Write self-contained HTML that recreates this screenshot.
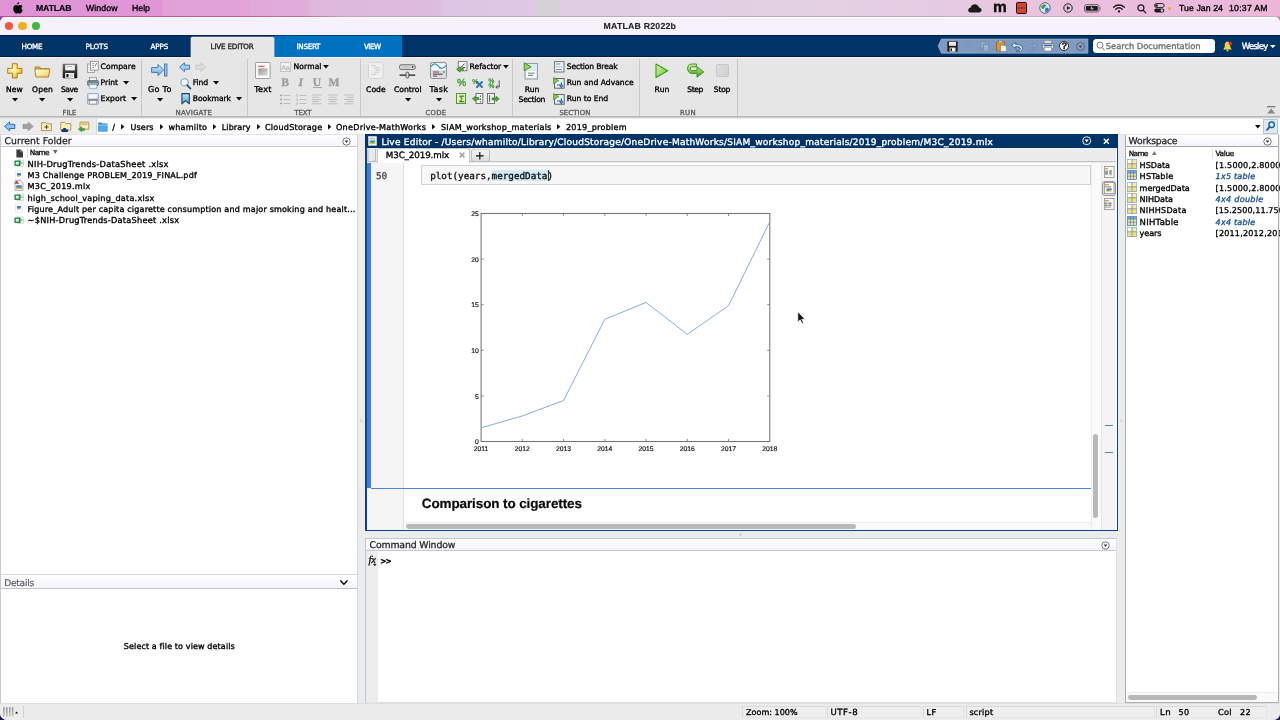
<!DOCTYPE html>
<html lang="en">
<head>
<meta charset="utf-8">
<title>MATLAB R2022b</title>
<style>
html,body{margin:0;padding:0;}
body{width:1280px;height:720px;overflow:hidden;position:relative;background:#ececec;font-family:"DejaVu Sans","Liberation Sans",sans-serif;}
#app{position:absolute;left:0;top:0;width:1280px;height:720px;overflow:hidden;will-change:transform;}
#app div,#app svg,#app .t{position:absolute;box-sizing:border-box;}
.t{white-space:pre;display:block;margin:0;padding:0;-webkit-text-stroke:.33px currentColor;text-rendering:geometricPrecision;}
svg{overflow:visible;}

</style>
</head>
<body>
<div id="app">
<section class="desktop">
<div style="left:0px;top:16px;width:9px;height:9px;background:linear-gradient(135deg,#a62bb4,#8e2a6a);"></div>
<div style="left:1272px;top:16px;width:8px;height:8px;background:#d879bd;"></div>
<div style="left:0px;top:708px;width:12px;height:12px;background:#1b0f52;"></div>
<div style="left:1268px;top:708px;width:12px;height:12px;background:#2a1a6a;"></div>
<div class="window" style="left:0px;top:16px;width:1280px;height:704px;background:#ececec;border-radius:6.5px 6.5px 7px 7px;"></div>
</section>
<section class="mac-menubar">
<div class="menubar" style="left:0px;top:0px;width:1280px;height:16.5px;background:linear-gradient(90deg,#df93d5 0,#e096d6 162px,#e1a1d7 163px,#e1a4d8 250px,#e0a9d9 251px,#e0acda 309px,#deb7dd 310px,#ddbcde 441px,#dcc5e4 442px,#dec8e4 534px,#d3d0d6 535px,#d3d0d6 560px,#e1cde2 561px,#e3d0e3 800px,#e6cbe2 960px,#eabfdd 1100px,#edb6d8 1280px);"></div>
<div style="left:0px;top:16px;width:1280px;height:1px;background:linear-gradient(90deg,#b44ea3 0,#c264ab 300px,#c79cc0 340px,#b3aabd 420px,#b7b0c2 1280px);"></div>
<svg style="left:12.5px;top:1.5px;" width="10" height="12" viewBox="0 0 10 12"><path d="M6.2 0.1 C6.3 1.3 5.3 2.6 4.1 2.6 C3.9 1.4 5.1 0.2 6.2 0.1 Z" fill="#0a0a0a"/><path d="M5 3.6 C5.7 3.6 6.3 3 7.3 3 C8.2 3 9 3.5 9.5 4.2 C8 5.2 8.2 7.4 9.8 8.1 C9.4 9.3 8.3 11.6 7.1 11.6 C6.4 11.6 6 11.2 5.1 11.2 C4.2 11.2 3.8 11.6 3.1 11.6 C1.8 11.6 0.2 8.8 0.2 6.6 C0.2 4.4 1.6 3 3.1 3 C3.9 3 4.5 3.6 5 3.6 Z" fill="#0a0a0a"/></svg>
<span class="t" style='left:36.00px;top:4px;font:700 8.73px/1 "Liberation Sans", sans-serif;color:#000;letter-spacing:-0.142px;-webkit-text-stroke-width:0.15px;'>MATLAB</span>
<span class="t" style='left:86.00px;top:4px;font:8.73px/1 "Liberation Sans", sans-serif;color:#000;letter-spacing:0.089px;'>Window</span>
<span class="t" style='left:132.00px;top:4px;font:8.73px/1 "Liberation Sans", sans-serif;color:#000;letter-spacing:0.013px;'>Help</span>
<svg style="left:968px;top:3.5px;" width="14" height="9" viewBox="0 0 14 9"><path d="M3.2 8.6 C1.4 8.6 .2 7.6 .2 6.2 C.2 4.9 1.2 3.9 2.6 3.8 C3 1.7 4.7 .3 6.8 .3 C8.8 .3 10.4 1.6 10.9 3.4 C12.5 3.6 13.6 4.7 13.6 6.1 C13.6 7.5 12.4 8.6 10.8 8.6 Z" fill="#1c1c1c"/></svg>
<span class="t" style='left:993.00px;top:0px;font:700 15.5px/1 "Liberation Sans", sans-serif;color:#0c0c0c;'>m</span>
<div style="left:1015.8px;top:2px;width:10.8px;height:11.8px;background:#d9442f;border:1.6px solid #1d1214;border-radius:1.6px;"></div>
<div style="left:1017.4px;top:7px;width:7.6px;height:1.8px;background:#8a4526;"></div>
<svg style="left:1038.6px;top:2.1px;" width="12" height="12" viewBox="0 0 12 12"><circle cx="6" cy="6" r="5.3" fill="#d9e6ee" stroke="#5a6a78" stroke-width="1"/><path d="M2 4.5 C3.5 2.5 6 2 7.5 3.2 C6.5 5 5 5.2 4.5 7 C3.2 7 2.2 6 2 4.5 Z" fill="#3f9b4a"/><path d="M6.5 6 C8 5.5 9.8 6.2 10.3 7.5 C9.5 9.6 7.6 10.4 6.4 10 C6 8.8 6 7 6.5 6 Z" fill="#2d78c8"/></svg>
<svg style="left:1062.6px;top:3.2px;" width="10" height="10" viewBox="0 0 10 10"><circle cx="5" cy="5" r="4.2" fill="none" stroke="#1c1c1c" stroke-width="1"/><path d="M3.9 3 L7.2 5 L3.9 7 Z" fill="#1c1c1c"/></svg>
<svg style="left:1084px;top:4px;" width="18" height="9" viewBox="0 0 18 9"><rect x=".5" y=".6" width="14.6" height="7.4" rx="2" fill="none" stroke="#555" stroke-width=".9"/><rect x="1.8" y="1.9" width="12" height="4.8" rx="1" fill="#1c1c1c"/><path d="M15.9 3 V5.7 C16.8 5.4 16.8 3.3 15.9 3 Z" fill="#555"/><path d="M8.6 1 L6 4.7 H7.8 L7 7.7 L9.8 3.9 H8 Z" fill="#e9c7df" stroke="#1c1c1c" stroke-width=".3"/></svg>
<svg style="left:1112.6px;top:3.6px;" width="12" height="9" viewBox="0 0 12 9"><path d="M.6 3.2 C3.6 .3 8.4 .3 11.4 3.2" fill="none" stroke="#1c1c1c" stroke-width="1.35" stroke-linecap="round"/><path d="M2.7 5.3 C4.6 3.6 7.4 3.6 9.3 5.3" fill="none" stroke="#1c1c1c" stroke-width="1.35" stroke-linecap="round"/><circle cx="6" cy="7.5" r="1.15" fill="#1c1c1c"/></svg>
<svg style="left:1136.6px;top:3.6px;" width="10" height="10" viewBox="0 0 10 10"><circle cx="3.9" cy="3.9" r="3" fill="none" stroke="#1c1c1c" stroke-width="1.2"/><path d="M6.1 6.1 L8.8 8.9" stroke="#1c1c1c" stroke-width="1.3" stroke-linecap="round"/></svg>
<svg style="left:1154px;top:3.4px;" width="11" height="10" viewBox="0 0 11 10"><rect x=".5" y=".5" width="9.6" height="4" rx="2" fill="none" stroke="#1c1c1c" stroke-width=".9"/><circle cx="2.6" cy="2.5" r="1.3" fill="#1c1c1c"/><rect x=".3" y="5.4" width="10" height="4.2" rx="2.1" fill="#1c1c1c"/><circle cx="7.9" cy="7.5" r="1.2" fill="#e9c7df"/></svg>
<div style="left:1167.6px;top:7px;width:3px;height:3px;background:#f0a227;border-radius:50%;"></div>
<span class="t" style='left:1179.00px;top:4px;font:8.73px/1 "Liberation Sans", sans-serif;color:#000;letter-spacing:0.071px;'>Tue Jan 24</span>
<span class="t" style='left:1229.00px;top:4px;font:8.73px/1 "Liberation Sans", sans-serif;color:#000;letter-spacing:0.230px;'>10:37 AM</span>
</section>
<section class="window-titlebar">
<div class="titlebar" style="left:0px;top:16.9px;width:1280px;height:18.1px;background:#f5f2fb;border-radius:6.5px 6.5px 0 0;box-shadow:inset 0 1.2px 0 #fff;"></div>
<div style="left:5.15px;top:21.85px;width:8.3px;height:8.3px;background:#f4553f;border-radius:50%;"></div>
<div style="left:18.450000000000003px;top:21.85px;width:8.3px;height:8.3px;background:#f3af22;border-radius:50%;"></div>
<div style="left:31.85px;top:21.85px;width:8.3px;height:8.3px;background:#3fb63b;border-radius:50%;"></div>
<span class="t" style='left:603.50px;top:22px;font:700 8.73px/1 "Liberation Sans", sans-serif;color:#222;letter-spacing:0.234px;-webkit-text-stroke-width:0.1px;'>MATLAB R2022b</span>
</section>
<section class="toolstrip-tabs">
<div class="tabstrip" style="left:0px;top:35px;width:1280px;height:22px;background:#003366;"></div>
<div style="left:274px;top:35px;width:128px;height:22px;background:#0071bf;"></div>
<div style="left:0px;top:35px;width:1280px;height:1px;background:rgba(0,0,40,.45);"></div>
<div style="left:0px;top:55.8px;width:274px;height:1.2px;background:rgba(0,0,50,.5);"></div>
<div style="left:402px;top:55.8px;width:878px;height:1.2px;background:rgba(0,0,50,.5);"></div>
<div style="left:0px;top:57px;width:1280px;height:1px;background:#f3f3f3;"></div>
<div style="left:190.5px;top:37.3px;width:83.5px;height:20.8px;background:#e6e6e6;border-radius:1.5px 1.5px 0 0;box-shadow:0 0 0 .6px rgba(255,255,255,.55);"></div>
<span class="t" style='left:21.50px;top:43px;font:7.18px/1 "DejaVu Sans", "Liberation Sans", sans-serif;color:#fff;letter-spacing:-0.250px;'>HOME</span>
<span class="t" style='left:85.50px;top:43px;font:7.18px/1 "DejaVu Sans", "Liberation Sans", sans-serif;color:#fff;letter-spacing:-0.036px;'>PLOTS</span>
<span class="t" style='left:150.60px;top:43px;font:7.18px/1 "DejaVu Sans", "Liberation Sans", sans-serif;color:#fff;letter-spacing:-0.137px;'>APPS</span>
<span class="t" style='left:210.60px;top:43px;font:7.18px/1 "DejaVu Sans", "Liberation Sans", sans-serif;color:#222;letter-spacing:-0.180px;'>LIVE EDITOR</span>
<span class="t" style='left:296.50px;top:43px;font:7.18px/1 "DejaVu Sans", "Liberation Sans", sans-serif;color:#fff;letter-spacing:-0.280px;'>INSERT</span>
<span class="t" style='left:364.00px;top:43px;font:7.18px/1 "DejaVu Sans", "Liberation Sans", sans-serif;color:#fff;letter-spacing:-0.547px;'>VIEW</span>
<svg style="left:938px;top:39px;" width="150" height="14.2" viewBox="0 0 150 14.2"><path d="M0 7.1 L3.4 0 H150 V14.2 H3.4 Z" fill="#7f9abf" stroke="#a9bdd8" stroke-width=".6"/></svg>
<svg style="left:946.5px;top:40.5px;" width="11" height="11" viewBox="0 0 11 11"><rect x=".3" y=".3" width="10.4" height="10.4" rx="1" fill="#222"/><rect x="2" y=".8" width="7" height="4" fill="#e8e8e8"/><rect x="2.6" y="6.6" width="5.8" height="4" fill="#f4f4f4"/><rect x="3.4" y="7.4" width="1.6" height="2.6" fill="#222"/></svg>
<svg style="left:964px;top:41px;opacity:.9;" width="9" height="11" viewBox="0 0 9 11"><path d="M6.2 0 L3.2 7 M2.6 1 L5.4 7" stroke="#7d96b4" stroke-width="1" fill="none"/><circle cx="2.4" cy="8.4" r="1.6" fill="none" stroke="#7d96b4" stroke-width="1"/><circle cx="6" cy="8.4" r="1.6" fill="none" stroke="#7d96b4" stroke-width="1"/></svg>
<svg style="left:980px;top:41px;" width="10" height="11" viewBox="0 0 10 11"><rect x=".5" y=".5" width="5" height="6.6" fill="#93a9c8" stroke="#748fb2" stroke-width=".8"/><rect x="3.6" y="3.4" width="5" height="6.6" fill="#9fb3cf" stroke="#748fb2" stroke-width=".8"/></svg>
<svg style="left:995.5px;top:40px;" width="11" height="12" viewBox="0 0 11 12"><rect x=".5" y="1.6" width="8" height="9.4" rx=".8" fill="#d9962c" stroke="#8a5a12" stroke-width=".7"/><rect x="2.4" y=".4" width="4.2" height="2.4" rx=".6" fill="#cfcfcf" stroke="#666" stroke-width=".5"/><path d="M4.6 5.2 H8.6 L10.4 7 V11.6 H4.6 Z" fill="#f1f1f1" stroke="#777" stroke-width=".6"/></svg>
<svg style="left:1010.6px;top:41.5px;" width="12" height="10" viewBox="0 0 12 10"><path d="M4.6 .4 L.4 3.4 L4.6 6.4 V4.6 C7.8 4.4 9.6 5.4 9.4 7 C9.2 8.2 7.6 8.8 5.4 8.7 V9.8 C9 10 11.6 8.8 11.6 6.6 C11.6 3.8 8.6 2.2 4.6 2.3 Z" fill="#dfeaf7" stroke="#1e5a9c" stroke-width=".8"/></svg>
<svg style="left:1026px;top:41.5px;" width="12" height="10" viewBox="0 0 12 10"><path d="M7.4 .4 L11.6 3.4 L7.4 6.4 V4.6 C4.2 4.4 2.4 5.4 2.6 7 C2.8 8.2 4.4 8.8 6.6 8.7 V9.8 C3 10 .4 8.8 .4 6.6 C.4 3.8 3.4 2.2 7.4 2.3 Z" fill="#8aa3c6" stroke="#6d8cab" stroke-width=".8"/></svg>
<svg style="left:1042px;top:40.4px;" width="12" height="11.4" viewBox="0 0 12 11.4"><rect x="2.2" y=".4" width="7.4" height="3.6" fill="#e0e0e0" stroke="#777" stroke-width=".5"/><rect x=".4" y="3.4" width="11.2" height="5.4" rx=".9" fill="#dcdcdc" stroke="#555" stroke-width=".6"/><rect x="1.8" y="4.6" width="8.4" height="1.6" fill="#2c6fb5"/><rect x="2.2" y="7.4" width="7.4" height="3.6" fill="#fafafa" stroke="#777" stroke-width=".5"/></svg>
<div style="left:1059px;top:40.6px;width:10.4px;height:10.4px;background:#fff;border-radius:50%;border:1.2px solid #2a2a35;"></div>
<span class="t" style='left:1061.60px;top:41px;font:700 9.4px/1 "Liberation Sans", sans-serif;color:#1a1a25;'>?</span>
<svg style="left:1075.6px;top:41.5px;" width="9" height="9" viewBox="0 0 9 9"><circle cx="4.5" cy="4.5" r="3.9" fill="#8ea4c4" stroke="#4a5b74" stroke-width=".9"/><path d="M2.5 3.5 H6.5 L4.5 6.3 Z" fill="#3d4c63"/></svg>
<div style="left:1092.8px;top:39px;width:122.4px;height:14.2px;background:#fff;border-radius:3.5px;"></div>
<svg style="left:1095.5px;top:41px;" width="9" height="10" viewBox="0 0 9 10"><circle cx="4" cy="4.2" r="3" fill="none" stroke="#6a6a6a" stroke-width=".9"/><path d="M6.2 6.6 L8.6 9.3" stroke="#6a6a6a" stroke-width="1"/></svg>
<span class="t" style='left:1105.80px;top:42px;font:8.34px/1 "DejaVu Sans", "Liberation Sans", sans-serif;color:#6b6b6b;letter-spacing:-0.040px;-webkit-text-stroke-width:0.3px;'>Search Documentation</span>
<svg style="left:1223.2px;top:40.6px;" width="10" height="11" viewBox="0 0 10 11"><path d="M4.4 .6 C2.6 .9 1.8 2.4 1.8 4.2 C1.8 6.2 1.2 7.2 .4 7.9 V8.6 H8.6 V7.9 C7.8 7.2 7.2 6.2 7.2 4.2 C7.2 2.4 6.2 .9 4.4 .6 Z" fill="#f3cf3a"/><circle cx="4.5" cy="9.5" r="1" fill="#f3cf3a"/><circle cx="7.4" cy="2.5" r="1.8" fill="#e5262b"/></svg>
<span class="t" style='left:1241.70px;top:43px;font:8.54px/1 "DejaVu Sans", "Liberation Sans", sans-serif;color:#fff;letter-spacing:-0.743px;'>Wesley</span>
<svg style="left:1269.6px;top:44.6px;" width="6" height="4" viewBox="0 0 6 4"><path d="M0 0 H5.6 L2.8 3.2 Z" fill="#fff"/></svg>
</section>
<section class="toolstrip-body">
<div class="toolstrip" style="left:0px;top:58px;width:1280px;height:58.2px;background:#e6e6e6;"></div>
<div style="left:0px;top:116.2px;width:1280px;height:1.1px;background:#b5b5b5;"></div>
<div style="left:0px;top:117.3px;width:1280px;height:1px;background:#cdcdcd;"></div>
<div style="left:0px;top:118.3px;width:1280px;height:1px;background:#ececec;"></div>
<div style="left:141.4px;top:58.6px;width:1px;height:57.4px;background:#c9c9c9;"></div>
<div style="left:247.3px;top:58.6px;width:1px;height:57.4px;background:#c9c9c9;"></div>
<div style="left:360px;top:58.6px;width:1px;height:57.4px;background:#c9c9c9;"></div>
<div style="left:512.2px;top:58.6px;width:1px;height:57.4px;background:#c9c9c9;"></div>
<div style="left:639.3px;top:58.6px;width:1px;height:57.4px;background:#c9c9c9;"></div>
<div style="left:737.3px;top:58.6px;width:1px;height:57.4px;background:#c9c9c9;"></div>
<svg style="left:7px;top:63px;" width="16" height="16" viewBox="0 0 16 16"><defs><radialGradient id="gnew" cx=".35" cy=".35" r=".8"><stop offset="0" stop-color="#fffde0"/><stop offset=".45" stop-color="#fbe36a"/><stop offset="1" stop-color="#e2a91e"/></radialGradient></defs><path d="M5.4 .7 H10.2 V5.4 H15 V10.2 H10.2 V15 H5.4 V10.2 H.7 V5.4 H5.4 Z" fill="url(#gnew)" stroke="#b27c1c" stroke-width="1" stroke-linejoin="round"/></svg>
<span class="t" style='left:6.00px;top:86px;font:7.61px/1 "DejaVu Sans", "Liberation Sans", sans-serif;color:#000;letter-spacing:0.102px;'>New</span>
<svg style="left:11.700000000000001px;top:98.25px;" width="6.2" height="3.5" viewBox="0 0 6.2 3.5"><path d="M0 0 H6.2 L3.1 3.5 Z" fill="#0a0a0a"/></svg>
<svg style="left:33.8px;top:65.6px;" width="17" height="12" viewBox="0 0 17 12"><defs><linearGradient id="gop" x1="0" y1="0" x2="1" y2="1"><stop offset="0" stop-color="#fffef2"/><stop offset=".5" stop-color="#fbeaa0"/><stop offset="1" stop-color="#efc94e"/></linearGradient></defs><path d="M.8 1 H5.6 L7.2 2.8 H15 V5 H3 Z" fill="#e9c25c" stroke="#a8761e" stroke-width=".9" stroke-linejoin="round"/><path d="M.8 3 H15.8 L14.6 11 H2 Z" fill="url(#gop)" stroke="#a8761e" stroke-width=".9" stroke-linejoin="round"/></svg>
<span class="t" style='left:32.00px;top:86px;font:7.61px/1 "DejaVu Sans", "Liberation Sans", sans-serif;color:#000;letter-spacing:0.158px;'>Open</span>
<svg style="left:39.199999999999996px;top:98.25px;" width="6.2" height="3.5" viewBox="0 0 6.2 3.5"><path d="M0 0 H6.2 L3.1 3.5 Z" fill="#0a0a0a"/></svg>
<svg style="left:62px;top:62.8px;" width="16" height="16" viewBox="0 0 16 16"><defs><linearGradient id="gsv" x1="0" y1="0" x2="0" y2="1"><stop offset="0" stop-color="#6e6e6e"/><stop offset=".5" stop-color="#3a3a3a"/><stop offset="1" stop-color="#0e0e0e"/></linearGradient></defs><rect x=".7" y=".7" width="14.6" height="14.6" rx="1" fill="url(#gsv)"/><rect x="3.2" y="1.8" width="9.6" height="5.6" fill="#f2f2f2"/><rect x="4.6" y="3" width="5.4" height="1" fill="#b5b5b5"/><rect x="3.2" y="10" width="9" height="5" fill="#f4f4f4"/><rect x="4.4" y="11" width="2.2" height="3.4" fill="#222"/><rect x="7.6" y="11" width="3.6" height="3.4" fill="#d8d8d8"/></svg>
<span class="t" style='left:61.00px;top:86px;font:7.61px/1 "DejaVu Sans", "Liberation Sans", sans-serif;color:#000;letter-spacing:-0.496px;'>Save</span>
<svg style="left:67.10000000000001px;top:98.25px;" width="6.2" height="3.5" viewBox="0 0 6.2 3.5"><path d="M0 0 H6.2 L3.1 3.5 Z" fill="#0a0a0a"/></svg>
<svg style="left:87px;top:61px;" width="12" height="12" viewBox="0 0 12 12"><rect x=".5" y="3" width="7" height="8.4" fill="#f3f3f3" stroke="#888" stroke-width=".7"/><rect x="3.6" y=".5" width="7.6" height="8.6" fill="#fafafa" stroke="#777" stroke-width=".7"/><path d="M5.4 2.6 H7 M5.4 4.6 H7 M5.4 6.6 H7" stroke="#555" stroke-width=".7"/><path d="M7.8 5.6 L9.8 2" stroke="#555" stroke-width=".7"/></svg>
<span class="t" style='left:100.60px;top:63px;font:7.61px/1 "DejaVu Sans", "Liberation Sans", sans-serif;color:#000;letter-spacing:0.079px;'>Compare</span>
<svg style="left:87px;top:77px;" width="12" height="12" viewBox="0 0 12 12"><rect x="2.4" y=".6" width="7.2" height="3.4" fill="#f2f2f2" stroke="#777" stroke-width=".6"/><rect x=".5" y="3.6" width="11" height="5" rx="1" fill="#7f8994" stroke="#4a5560" stroke-width=".6"/><rect x="1.6" y="6.4" width="8.8" height="1.5" fill="#9fc6ea"/><rect x="2.2" y="7.8" width="7.6" height="3.4" fill="#fcfcfc" stroke="#5d8fc2" stroke-width=".6"/></svg>
<span class="t" style='left:100.60px;top:79px;font:7.61px/1 "DejaVu Sans", "Liberation Sans", sans-serif;color:#000;letter-spacing:-0.026px;'>Print</span>
<svg style="left:122.60000000000001px;top:80.85px;" width="6.2" height="3.5" viewBox="0 0 6.2 3.5"><path d="M0 0 H6.2 L3.1 3.5 Z" fill="#0a0a0a"/></svg>
<svg style="left:87px;top:93px;" width="12" height="12" viewBox="0 0 12 12"><rect x=".6" y=".6" width="10.8" height="10.6" rx=".8" fill="#cfe1f2" stroke="#7a9cc0" stroke-width=".8"/><rect x="2.2" y="1.4" width="7.6" height="4" fill="#f6f6f6"/><rect x="1.2" y="5.8" width="9.6" height="2.4" fill="#8a8f96"/><rect x="2.8" y="7.6" width="6.4" height="3.4" fill="#fafafa" stroke="#777" stroke-width=".5"/></svg>
<span class="t" style='left:100.60px;top:95px;font:7.61px/1 "DejaVu Sans", "Liberation Sans", sans-serif;color:#000;letter-spacing:0.097px;'>Export</span>
<svg style="left:130.70000000000002px;top:96.95px;" width="6.2" height="3.5" viewBox="0 0 6.2 3.5"><path d="M0 0 H6.2 L3.1 3.5 Z" fill="#0a0a0a"/></svg>
<span class="t" style='left:62.60px;top:110px;font:6.89px/1 "DejaVu Sans", "Liberation Sans", sans-serif;color:#5c5c5c;letter-spacing:-0.124px;'>FILE</span>
<svg style="left:151px;top:63px;" width="17" height="14" viewBox="0 0 17 14"><defs><linearGradient id="ggo" x1="0" y1="0" x2="0" y2="1"><stop offset="0" stop-color="#d9ecfb"/><stop offset="1" stop-color="#6ea9de"/></linearGradient></defs><path d="M.6 4.6 H7 V1.4 L12.6 7 L7 12.6 V9.4 H.6 Z" fill="url(#ggo)" stroke="#2f6fb1" stroke-width=".9" stroke-linejoin="round"/><rect x="13.4" y="1" width="2.6" height="12" fill="#8fc0ea" stroke="#2f6fb1" stroke-width=".8"/></svg>
<span class="t" style='left:148.00px;top:85px;font:8.09px/1 "DejaVu Sans", "Liberation Sans", sans-serif;color:#000;letter-spacing:0.278px;'>Go To</span>
<svg style="left:156.6px;top:98.25px;" width="6.2" height="3.5" viewBox="0 0 6.2 3.5"><path d="M0 0 H6.2 L3.1 3.5 Z" fill="#0a0a0a"/></svg>
<svg style="left:179px;top:61.5px;" width="28" height="11" viewBox="0 0 28 11"><path d="M.6 5.2 L5.4 .8 V3.2 H10.6 V7.2 H5.4 V9.6 Z" fill="#a9cff0" stroke="#2f6fb1" stroke-width=".9" stroke-linejoin="round"/><path d="M26.8 5.2 L22 .8 V3.2 H16.8 V7.2 H22 V9.6 Z" fill="#dcdcdc" stroke="#c2c2c2" stroke-width=".8" stroke-linejoin="round"/></svg>
<svg style="left:180px;top:77.5px;" width="12" height="12" viewBox="0 0 12 12"><circle cx="4.6" cy="4.4" r="3.6" fill="#f2f8fd" stroke="#6f9fce" stroke-width="1.1"/><path d="M7.2 7.2 L10.4 10.6" stroke="#1f4f8f" stroke-width="1.8" stroke-linecap="round"/></svg>
<span class="t" style='left:192.80px;top:79px;font:7.61px/1 "DejaVu Sans", "Liberation Sans", sans-serif;color:#000;letter-spacing:-0.132px;'>Find</span>
<svg style="left:213.20000000000002px;top:80.85px;" width="6.2" height="3.5" viewBox="0 0 6.2 3.5"><path d="M0 0 H6.2 L3.1 3.5 Z" fill="#0a0a0a"/></svg>
<svg style="left:180.5px;top:93px;" width="10" height="12" viewBox="0 0 10 12"><defs><linearGradient id="gbm" x1="0" y1="0" x2="0" y2="1"><stop offset="0" stop-color="#bfe6f7"/><stop offset="1" stop-color="#4ba3d6"/></linearGradient></defs><path d="M.9 .6 H8.3 V10.8 L4.6 7.6 L.9 10.8 Z" fill="url(#gbm)" stroke="#1d3f5f" stroke-width="1.1" stroke-linejoin="round"/></svg>
<span class="t" style='left:192.80px;top:95px;font:7.61px/1 "DejaVu Sans", "Liberation Sans", sans-serif;color:#000;letter-spacing:-0.051px;'>Bookmark</span>
<svg style="left:236.1px;top:96.95px;" width="6.2" height="3.5" viewBox="0 0 6.2 3.5"><path d="M0 0 H6.2 L3.1 3.5 Z" fill="#0a0a0a"/></svg>
<span class="t" style='left:175.60px;top:110px;font:7.0px/1 "DejaVu Sans", "Liberation Sans", sans-serif;color:#5c5c5c;letter-spacing:0.234px;'>NAVIGATE</span>
<svg style="left:255px;top:62px;" width="16" height="17" viewBox="0 0 16 17"><rect x=".5" y=".5" width="14.6" height="16" rx=".8" fill="#fbfbfb" stroke="#8a8a8a" stroke-width=".8"/><rect x="3.2" y="3.8" width="6.4" height="1" fill="#e8402a"/><defs><linearGradient id="gtx" x1="0" y1="0" x2="1" y2="1"><stop offset="0" stop-color="#9a9a9a"/><stop offset="1" stop-color="#dadada"/></linearGradient></defs><rect x="3.2" y="6.4" width="9.4" height="7" fill="url(#gtx)"/></svg>
<span class="t" style='left:254.20px;top:85px;font:8.09px/1 "DejaVu Sans", "Liberation Sans", sans-serif;color:#000;letter-spacing:0.283px;'>Text</span>
<div style="left:280px;top:61.5px;width:11px;height:10.6px;background:#f1f1f1;border:.8px solid #c4c4c4;"></div>
<span class="t" style='left:281.30px;top:65px;font:7.18px/1 "Liberation Sans", sans-serif;color:#bdbdbd;letter-spacing:-0.275px;'>Aa</span>
<span class="t" style='left:293.60px;top:63px;font:7.61px/1 "DejaVu Sans", "Liberation Sans", sans-serif;color:#000;letter-spacing:0.072px;'>Normal</span>
<svg style="left:322.90000000000003px;top:64.89999999999999px;" width="5.8" height="3.4" viewBox="0 0 5.8 3.4"><path d="M0 0 H5.8 L2.9 3.4 Z" fill="#0a0a0a"/></svg>
<span class="t" style='left:281.20px;top:77px;font:700 11.6px/1 "Liberation Serif", serif;color:#9c9c9c;'>B</span>
<span class="t" style='left:298.40px;top:77px;font:italic 700 11.6px/1 "Liberation Serif", serif;color:#9c9c9c;'>I</span>
<span class="t" style='left:312.80px;top:77px;font:700 11.6px/1 "Liberation Serif", serif;color:#9c9c9c;'>U</span>
<div style="left:313.4px;top:87.4px;width:8.2px;height:0.8px;background:#a8a8a8;"></div>
<span class="t" style='left:328.60px;top:77px;font:700 11.6px/1 "Liberation Serif", serif;color:#9c9c9c;'>M</span>
<svg style="left:280px;top:93.6px;" width="11" height="11" viewBox="0 0 11 11"><circle cx="1" cy="1.4" r=".95" fill="#9a9a9a"/><rect x="3.4" y="1" width="7" height=".9" fill="#b9b9b9"/><circle cx="1" cy="5.4" r=".95" fill="#9a9a9a"/><rect x="3.4" y="5" width="7" height=".9" fill="#b9b9b9"/><circle cx="1" cy="9.4" r=".95" fill="#9a9a9a"/><rect x="3.4" y="9" width="7" height=".9" fill="#b9b9b9"/></svg>
<svg style="left:296px;top:93.6px;" width="11" height="11" viewBox="0 0 11 11"><rect x=".6" y="0.4" width=".9" height="2.4" fill="#a5a5a5"/><rect x="3.4" y="1" width="7" height=".9" fill="#b9b9b9"/><rect x=".6" y="4.4" width=".9" height="2.4" fill="#a5a5a5"/><rect x="3.4" y="5" width="7" height=".9" fill="#b9b9b9"/><rect x=".6" y="8.4" width=".9" height="2.4" fill="#a5a5a5"/><rect x="3.4" y="9" width="7" height=".9" fill="#b9b9b9"/></svg>
<svg style="left:312.4px;top:93.6px;" width="10" height="11" viewBox="0 0 10 11"><rect x="0" y="0.6" width="9.6" height=".85" fill="#b9b9b9"/><rect x="0" y="2.8000000000000003" width="7" height=".85" fill="#b9b9b9"/><rect x="0" y="5.0" width="9.6" height=".85" fill="#b9b9b9"/><rect x="0" y="7.2" width="7" height=".85" fill="#b9b9b9"/><rect x="0" y="9.4" width="9.6" height=".85" fill="#b9b9b9"/></svg>
<svg style="left:328.4px;top:93.6px;" width="10" height="11" viewBox="0 0 10 11"><rect x="0.0" y="0.6" width="9.6" height=".85" fill="#b9b9b9"/><rect x="1.2999999999999998" y="2.8000000000000003" width="7" height=".85" fill="#b9b9b9"/><rect x="0.0" y="5.0" width="9.6" height=".85" fill="#b9b9b9"/><rect x="1.2999999999999998" y="7.2" width="7" height=".85" fill="#b9b9b9"/><rect x="0.0" y="9.4" width="9.6" height=".85" fill="#b9b9b9"/></svg>
<svg style="left:344.4px;top:93.6px;" width="10" height="11" viewBox="0 0 10 11"><rect x="0.0" y="0.6" width="9.6" height=".85" fill="#b9b9b9"/><rect x="2.5999999999999996" y="2.8000000000000003" width="7" height=".85" fill="#b9b9b9"/><rect x="0.0" y="5.0" width="9.6" height=".85" fill="#b9b9b9"/><rect x="2.5999999999999996" y="7.2" width="7" height=".85" fill="#b9b9b9"/><rect x="0.0" y="9.4" width="9.6" height=".85" fill="#b9b9b9"/></svg>
<span class="t" style='left:294.40px;top:110px;font:6.89px/1 "DejaVu Sans", "Liberation Sans", sans-serif;color:#5c5c5c;letter-spacing:-0.051px;'>TEXT</span>
<svg style="left:368px;top:62px;" width="16" height="17" viewBox="0 0 16 17"><rect x=".5" y=".5" width="14.6" height="16" rx=".8" fill="#efefef" stroke="#cfcfcf" stroke-width=".8"/><path d="M3.2 3.6 H8 M5.6 5.8 H11.6 M7.4 8 H12.4 M5.6 10.2 H11 M3.2 12.4 H8.4" stroke="#c6c6c6" stroke-width=".9"/></svg>
<span class="t" style='left:366.00px;top:86px;font:7.61px/1 "DejaVu Sans", "Liberation Sans", sans-serif;color:#000;letter-spacing:0.070px;'>Code</span>
<svg style="left:398.5px;top:63.5px;" width="17" height="15" viewBox="0 0 17 15"><rect x=".6" y=".8" width="15.6" height="4.6" rx="1.6" fill="#e9e9e9" stroke="#555" stroke-width=".9"/><rect x="2" y="2.2" width="10" height="1.6" fill="#bdbdbd"/><circle cx="13.6" cy="3.1" r="1" fill="#444"/><rect x=".6" y="10.4" width="15.6" height="1.5" fill="#3c3c3c"/><rect x="7" y="8.2" width="2.8" height="5.8" rx=".8" fill="#d8d8d8" stroke="#444" stroke-width=".8"/></svg>
<span class="t" style='left:394.00px;top:86px;font:7.61px/1 "DejaVu Sans", "Liberation Sans", sans-serif;color:#000;'>Control</span>
<svg style="left:404.5px;top:98.25px;" width="6.2" height="3.5" viewBox="0 0 6.2 3.5"><path d="M0 0 H6.2 L3.1 3.5 Z" fill="#0a0a0a"/></svg>
<svg style="left:430px;top:62px;" width="17" height="17" viewBox="0 0 17 17"><rect x=".6" y=".6" width="15.8" height="15.8" rx="1.6" fill="#f7f7f7" stroke="#777" stroke-width=".9"/><path d="M1.2 4.6 C3.4 1 5.8 1 8.4 4.4 C10.8 7.4 13.4 6.8 15.8 3.6" fill="none" stroke="#2a8ec9" stroke-width="1.1"/><rect x="1.2" y="8" width="14.6" height="7.6" fill="#dcdcdc"/><rect x="3" y="9.4" width="6" height="1.2" fill="#9a4a9a"/><rect x="3" y="11.6" width="9.6" height="1.2" fill="#555"/><rect x="3" y="13.6" width="4" height="1.1" fill="#9a4a9a"/><rect x="13" y="9.2" width="1.8" height="1.6" fill="#4aa33f"/></svg>
<span class="t" style='left:429.60px;top:85px;font:8.09px/1 "DejaVu Sans", "Liberation Sans", sans-serif;color:#000;letter-spacing:0.318px;'>Task</span>
<svg style="left:435.9px;top:98.25px;" width="6.2" height="3.5" viewBox="0 0 6.2 3.5"><path d="M0 0 H6.2 L3.1 3.5 Z" fill="#0a0a0a"/></svg>
<svg style="left:456px;top:61px;" width="12" height="12" viewBox="0 0 12 12"><rect x="2.2" y=".6" width="8.8" height="9.2" fill="#f5f5f5" stroke="#666" stroke-width=".8"/><path d="M4 7.4 L8.6 2.6 M6.6 6.4 H9.4" stroke="#333" stroke-width=".9"/><path d="M.4 8.2 L4.2 5.4 V7 H7.4 V9.6 H4.2 V11.2 Z" fill="#55a83a" stroke="#2f7a1e" stroke-width=".5"/></svg>
<span class="t" style='left:469.60px;top:63px;font:7.61px/1 "DejaVu Sans", "Liberation Sans", sans-serif;color:#000;letter-spacing:-0.046px;'>Refactor</span>
<svg style="left:502.90000000000003px;top:64.89999999999999px;" width="5.8" height="3.4" viewBox="0 0 5.8 3.4"><path d="M0 0 H5.8 L2.9 3.4 Z" fill="#0a0a0a"/></svg>
<span class="t" style='left:457.00px;top:79px;font:10.4px/1 "Liberation Sans", sans-serif;color:#3f9a2e;'>%</span>
<span class="t" style='left:472.20px;top:79px;font:7px/1 "Liberation Sans", sans-serif;color:#3f9a2e;'>%</span>
<svg style="left:476.2px;top:81px;" width="7" height="7" viewBox="0 0 7 7"><path d="M1 1 L6 6 M6 1 L1 6" stroke="#2f6fb5" stroke-width="2" stroke-linecap="round"/></svg>
<span class="t" style='left:488.60px;top:79px;font:6.6px/1 "Liberation Sans", sans-serif;color:#3f9a2e;'>%</span>
<span class="t" style='left:488.60px;top:84px;font:6.6px/1 "Liberation Sans", sans-serif;color:#3f9a2e;'>%</span>
<svg style="left:494.6px;top:79.6px;" width="6" height="9" viewBox="0 0 6 9"><path d="M4.2 .4 V7 H1.2 M2.6 5.4 L.8 7 L2.6 8.6" fill="none" stroke="#444" stroke-width=".9"/></svg>
<div style="left:456.4px;top:93.4px;width:10px;height:10.8px;background:#eef2b0;border:1px solid #4b9a3a;"></div>
<span class="t" style='left:459.00px;top:95px;font:9px/1 "Liberation Sans", sans-serif;color:#2d7d22;'>Σ</span>
<svg style="left:472px;top:93.4px;" width="12" height="11" viewBox="0 0 12 11"><rect x="4" y=".5" width="6.8" height="10" fill="#f2f2f2" stroke="#555" stroke-width=".8"/><path d="M8.4 2.4 V4 M8.4 5.4 V7 M8.4 8.2 V9.4" stroke="#444" stroke-width=".9"/><path d="M.3 5.6 L3.6 3 V4.6 H7 V6.8 H3.6 V8.4 Z" fill="#4aa33a" stroke="#2f7a1e" stroke-width=".5"/></svg>
<svg style="left:487.4px;top:93.4px;" width="13" height="11" viewBox="0 0 13 11"><rect x=".6" y=".5" width="7" height="10" fill="#f2f2f2" stroke="#555" stroke-width=".8"/><path d="M2.6 2.2 V9" stroke="#444" stroke-width=".9"/><path d="M12.4 5.8 L9 3.2 V4.8 H5 V7 H9 V8.6 Z" fill="#4aa33a" stroke="#2f7a1e" stroke-width=".5"/></svg>
<span class="t" style='left:425.60px;top:110px;font:6.89px/1 "DejaVu Sans", "Liberation Sans", sans-serif;color:#5c5c5c;letter-spacing:0.177px;'>CODE</span>
<svg style="left:523px;top:62px;" width="16" height="18" viewBox="0 0 16 18"><rect x="2" y="1.6" width="12.6" height="15.4" fill="#dcecf7" stroke="#7d8a96" stroke-width=".8"/><rect x="3.4" y="9" width="9.8" height="6.8" fill="#fbfbfb"/><path d="M5 11.2 H11.6 M5 13.4 H10" stroke="#666" stroke-width=".9"/><path d="M1.2 .8 L8.2 4.8 L1.2 8.8 Z" fill="#9ed45a" stroke="#3a8a1e" stroke-width=".9" stroke-linejoin="round"/></svg>
<span class="t" style='left:524.80px;top:86px;font:7.61px/1 "DejaVu Sans", "Liberation Sans", sans-serif;color:#000;'>Run</span>
<span class="t" style='left:518.60px;top:96px;font:7.61px/1 "DejaVu Sans", "Liberation Sans", sans-serif;color:#000;letter-spacing:-0.247px;'>Section</span>
<svg style="left:553.8px;top:61px;" width="10.2" height="11.2" viewBox="0 0 10.2 11.2"><rect x=".6" y=".6" width="9.4" height="10.4" fill="#eef4fa" stroke="#666" stroke-width=".9"/><rect x="2" y="2.2" width="4.4" height="1.6" fill="#9ab6d3"/><path d="M2 5.8 H8.6" stroke="#777" stroke-width=".7" stroke-dasharray="1 .7"/><path d="M2 8.6 H8" stroke="#5b7fa6" stroke-width=".9"/></svg>
<span class="t" style='left:566.80px;top:63px;font:7.61px/1 "DejaVu Sans", "Liberation Sans", sans-serif;color:#000;letter-spacing:-0.152px;'>Section Break</span>
<svg style="left:553px;top:77px;" width="12" height="12" viewBox="0 0 12 12"><rect x="1.6" y="1.6" width="9.6" height="9.6" fill="#e6f0f8" stroke="#555" stroke-width=".9"/><path d="M.6 .6 L5.6 3.6 L.6 6.6 Z" fill="#8fcf4f" stroke="#2f7a1e" stroke-width=".7"/><path d="M4 8 H8.6" stroke="#3a78b8" stroke-width="1.1"/><path d="M8.4 5.4 V9 M6.6 8 L8.4 10.6 L10.2 8" fill="none" stroke="#2f6fb5" stroke-width="1.2"/></svg>
<span class="t" style='left:566.80px;top:79px;font:7.61px/1 "DejaVu Sans", "Liberation Sans", sans-serif;color:#000;letter-spacing:0.021px;'>Run and Advance</span>
<svg style="left:553px;top:93px;" width="12" height="12" viewBox="0 0 12 12"><rect x="1.6" y="1.6" width="9.6" height="9.6" fill="#e6f0f8" stroke="#555" stroke-width=".9"/><path d="M.6 .6 L5.6 3.6 L.6 6.6 Z" fill="#8fcf4f" stroke="#2f7a1e" stroke-width=".7"/><path d="M4 8 H8.6" stroke="#3a78b8" stroke-width="1.1"/><path d="M8.4 5.4 V9 M6.6 8 L8.4 10.6 L10.2 8" fill="none" stroke="#2f6fb5" stroke-width="1.2"/></svg>
<span class="t" style='left:566.80px;top:95px;font:7.61px/1 "DejaVu Sans", "Liberation Sans", sans-serif;color:#000;letter-spacing:-0.014px;'>Run to End</span>
<span class="t" style='left:559.40px;top:110px;font:6.89px/1 "DejaVu Sans", "Liberation Sans", sans-serif;color:#5c5c5c;letter-spacing:0.112px;'>SECTION</span>
<svg style="left:655px;top:62.5px;" width="14" height="16" viewBox="0 0 14 16"><defs><linearGradient id="grun" x1="0" y1="0" x2="1" y2="1"><stop offset="0" stop-color="#d9f2a8"/><stop offset="1" stop-color="#6cc23a"/></linearGradient></defs><path d="M1 1 L12.8 7.8 L1 14.6 Z" fill="url(#grun)" stroke="#3f9a22" stroke-width="1.1" stroke-linejoin="round"/></svg>
<span class="t" style='left:654.60px;top:86px;font:7.61px/1 "DejaVu Sans", "Liberation Sans", sans-serif;color:#000;letter-spacing:0.102px;'>Run</span>
<svg style="left:687px;top:63px;" width="18" height="16" viewBox="0 0 18 16"><defs><linearGradient id="gstep" x1="0" y1="0" x2="0" y2="1"><stop offset="0" stop-color="#d3ee9a"/><stop offset=".5" stop-color="#8fcf4a"/><stop offset="1" stop-color="#3f9a22"/></linearGradient></defs><path d="M9.4 1 H4.8 C1.8 1 .6 3 .6 5.4 C.6 8 2 10.4 5 10.4 H10 V14.2 L16.8 9 L10 3.8 V7.6 H5.2 C3.8 7.6 3.4 6.4 3.4 5.4 C3.4 4.4 4 3.8 5.2 3.8 H9.4 Z" fill="url(#gstep)" stroke="#2f8a1c" stroke-width=".9" stroke-linejoin="round"/></svg>
<span class="t" style='left:687.20px;top:86px;font:7.61px/1 "DejaVu Sans", "Liberation Sans", sans-serif;color:#000;letter-spacing:-0.375px;'>Step</span>
<div style="left:716px;top:64px;width:13.2px;height:13px;background:linear-gradient(135deg,#dedede,#d0d0d0);border:1px solid #c8c8c8;border-radius:1.5px;"></div>
<span class="t" style='left:713.80px;top:86px;font:7.61px/1 "DejaVu Sans", "Liberation Sans", sans-serif;color:#000;letter-spacing:-0.236px;'>Stop</span>
<span class="t" style='left:680.00px;top:110px;font:6.89px/1 "DejaVu Sans", "Liberation Sans", sans-serif;color:#5c5c5c;letter-spacing:0.313px;'>RUN</span>
<svg style="left:1266.5px;top:105.5px;" width="9" height="8" viewBox="0 0 9 8"><path d="M0 .7 H8.4" stroke="#777" stroke-width="1.3"/><path d="M4.2 2.6 L8.2 7.6 H.2 Z" fill="#8a8a8a"/></svg>
</section>
<section class="address-bar">
<div class="addressbar" style="left:0px;top:119px;width:1280px;height:15.4px;background:#fff;"></div>
<div style="left:0px;top:119px;width:95.6px;height:15px;background:#ececec;"></div>
<div style="left:95.6px;top:119px;width:1px;height:15px;background:#d5d5d5;"></div>
<div style="left:0px;top:134px;width:1280px;height:1px;background:#e4e4e4;"></div>
<svg style="left:4px;top:120.8px;" width="12" height="11" viewBox="0 0 12 11"><path d="M.6 5.4 L5.6 .9 V3.3 H10.8 V7.5 H5.6 V9.9 Z" fill="#8fc4f0" stroke="#2a6db5" stroke-width="1" stroke-linejoin="round"/></svg>
<svg style="left:22px;top:120.6px;" width="12" height="11" viewBox="0 0 12 11"><path d="M11.2 5.4 L6.2 .9 V3.3 H1 V7.5 H6.2 V9.9 Z" fill="#a0a0a0" stroke="#8b8b8b" stroke-width=".6" stroke-linejoin="round"/></svg>
<svg style="left:41px;top:121.2px;" width="11" height="11" viewBox="0 0 11 11"><path d="M.6 1.6 H4.4 L5.4 2.8 H10.4 V9.6 H.6 Z" fill="#f9efbe" stroke="#ad7f2c" stroke-width=".8" stroke-linejoin="round"/><path d="M3.4 6 H7.6 M5.5 4 V8" stroke="#333" stroke-width=".9"/></svg>
<svg style="left:59.6px;top:120.6px;" width="12" height="12" viewBox="0 0 12 12"><path d="M.8 1.4 H4.6 L5.6 2.6 H10.8 V9 H.8 Z" fill="#f9efbe" stroke="#ad7f2c" stroke-width=".8" stroke-linejoin="round"/><path d="M2.4 11 C.8 11 .6 8.8 2.4 8.6 C2.8 6.6 6 6.4 6.6 8.4 C8.6 8.2 8.8 11 6.8 11 Z" fill="#12367a"/></svg>
<svg style="left:78.4px;top:120.6px;" width="12" height="12" viewBox="0 0 12 12"><path d="M2 1.2 H10.8 V8.2 H2 Z" fill="#f9efbe" stroke="#ad7f2c" stroke-width=".8" stroke-linejoin="round"/><path d="M3.4 3.2 H9.4" stroke="#a67d1e" stroke-width=".7"/><path d="M.4 8.2 L3.6 5.8 V7.4 H6.4 V9.4 H3.6 V10.8 Z" fill="#4aa33a" stroke="#2f7a1e" stroke-width=".5"/></svg>
<svg style="left:98px;top:122px;" width="10" height="10" viewBox="0 0 10 10"><path d="M.2 .4 H3.6 L4.4 1.4 H9.4 V9.4 H.2 Z" fill="#2a86d0"/><rect x=".2" y="2.8" width="9.2" height="6.6" fill="#4eaaea"/><rect x=".2" y="2.6" width="9.2" height=".9" fill="#a8d8f8"/></svg>
<span class="t" style='left:112.20px;top:123px;font:8.3px/1 "DejaVu Sans", "Liberation Sans", sans-serif;color:#000;'>/</span>
<span class="t" style='left:130.50px;top:124px;font:8.05px/1 "DejaVu Sans", "Liberation Sans", sans-serif;color:#000;letter-spacing:0.116px;'>Users</span>
<span class="t" style='left:168.40px;top:124px;font:8.05px/1 "DejaVu Sans", "Liberation Sans", sans-serif;color:#000;letter-spacing:0.227px;'>whamilto</span>
<span class="t" style='left:221.80px;top:124px;font:8.05px/1 "DejaVu Sans", "Liberation Sans", sans-serif;color:#000;letter-spacing:0.076px;'>Library</span>
<span class="t" style='left:265.00px;top:124px;font:8.07px/1 "DejaVu Sans", "Liberation Sans", sans-serif;color:#000;letter-spacing:0.234px;'>CloudStorage</span>
<span class="t" style='left:336.00px;top:123px;font:8.1px/1 "DejaVu Sans", "Liberation Sans", sans-serif;color:#000;letter-spacing:0.238px;'>OneDrive-MathWorks</span>
<span class="t" style='left:441.00px;top:123px;font:8.12px/1 "DejaVu Sans", "Liberation Sans", sans-serif;color:#000;letter-spacing:0.226px;'>SIAM_workshop_materials</span>
<span class="t" style='left:566.00px;top:124px;font:8.06px/1 "DejaVu Sans", "Liberation Sans", sans-serif;color:#000;letter-spacing:0.248px;'>2019_problem</span>
<svg style="left:121.30000000000001px;top:124.2px;" width="3.6" height="5.6" viewBox="0 0 3.6 5.6"><path d="M0 0 L3.4 2.7 L0 5.4 Z" fill="#111"/></svg>
<svg style="left:159.5px;top:124.2px;" width="3.6" height="5.6" viewBox="0 0 3.6 5.6"><path d="M0 0 L3.4 2.7 L0 5.4 Z" fill="#111"/></svg>
<svg style="left:212.9px;top:124.2px;" width="3.6" height="5.6" viewBox="0 0 3.6 5.6"><path d="M0 0 L3.4 2.7 L0 5.4 Z" fill="#111"/></svg>
<svg style="left:256.5px;top:124.2px;" width="3.6" height="5.6" viewBox="0 0 3.6 5.6"><path d="M0 0 L3.4 2.7 L0 5.4 Z" fill="#111"/></svg>
<svg style="left:327.5px;top:124.2px;" width="3.6" height="5.6" viewBox="0 0 3.6 5.6"><path d="M0 0 L3.4 2.7 L0 5.4 Z" fill="#111"/></svg>
<svg style="left:432.09999999999997px;top:124.2px;" width="3.6" height="5.6" viewBox="0 0 3.6 5.6"><path d="M0 0 L3.4 2.7 L0 5.4 Z" fill="#111"/></svg>
<svg style="left:557.3px;top:124.2px;" width="3.6" height="5.6" viewBox="0 0 3.6 5.6"><path d="M0 0 L3.4 2.7 L0 5.4 Z" fill="#111"/></svg>
<svg style="left:1254.8px;top:125.1px;" width="5.6" height="3.4" viewBox="0 0 5.6 3.4"><path d="M0 0 H5.6 L2.8 3.4 Z" fill="#0a0a0a"/></svg>
<div style="left:1263px;top:118.6px;width:15.4px;height:15.2px;background:#dfe9f5;border:1px solid #b9c6d8;"></div>
<svg style="left:1266px;top:121.4px;" width="10" height="10" viewBox="0 0 10 10"><circle cx="5.6" cy="3.8" r="2.7" fill="#eaf3ff" stroke="#1d5fae" stroke-width="1.5"/><path d="M3.7 5.8 L1 8.8" stroke="#1d5fae" stroke-width="1.9" stroke-linecap="round"/></svg>
</section>
<section class="current-folder-panel">
<div class="panel currentfolder" style="left:0px;top:134.6px;width:357.6px;height:440px;background:#fff;border:1px solid #d6dae5;border-left:1.1px solid #c9c9cd;border-bottom:0;"></div>
<div style="left:1px;top:135.4px;width:355.8px;height:11.4px;background:linear-gradient(180deg,#ffffff,#f4f5fb);border-bottom:1px solid #c8c8c8;"></div>
<span class="t" style='left:4.60px;top:137px;font:9.31px/1 "DejaVu Sans", "Liberation Sans", sans-serif;color:#222;letter-spacing:0.025px;-webkit-text-stroke-width:0.25px;'>Current Folder</span>
<svg style="left:342.1px;top:136.7px;" width="9" height="9" viewBox="0 0 9 9"><circle cx="4.5" cy="4.5" r="3.7" fill="#fff" stroke="#555" stroke-width=".8"/><path d="M2.7 3.5 H6.3 L4.5 6 Z" fill="#333"/></svg>
<svg style="left:15.6px;top:148.6px;" width="8" height="9" viewBox="0 0 8 9"><path d="M.4 .4 H4.6 L7 2.8 V8.4 H.4 Z" fill="#3c3c3c"/><path d="M4.6 .4 V2.8 H7" fill="none" stroke="#aaa" stroke-width=".6"/></svg>
<div style="left:26.6px;top:148px;width:1px;height:9.6px;background:#d9d9d9;"></div>
<span class="t" style='left:29.80px;top:149px;font:7.37px/1 "DejaVu Sans", "Liberation Sans", sans-serif;color:#111;letter-spacing:-0.645px;'>Name</span>
<svg style="left:52.6px;top:150.4px;" width="5" height="4.4" viewBox="0 0 5 4.4"><path d="M0 0 H4.6 L2.3 4 Z" fill="#666"/></svg>
<span class="t" style='left:27.60px;top:160px;font:8.36px/1 "DejaVu Sans", "Liberation Sans", sans-serif;color:#000;letter-spacing:0.219px;'>NIH-DrugTrends-DataSheet .xlsx</span>
<svg style="left:13.6px;top:158.4px;" width="10" height="10" viewBox="0 0 10 10"><rect x="3.4" y="2" width="6" height="6.4" fill="#f4f4f4" stroke="#b5b5b5" stroke-width=".5"/><rect x=".4" y="2.4" width="6.2" height="5.6" rx=".8" fill="#1e8a3c"/><rect x="1.8" y="3.8" width="3" height="2.8" fill="#e8f5ea"/><rect x="7" y="4.4" width="1.6" height="1.4" fill="#6ab783"/></svg>
<span class="t" style='left:27.60px;top:172px;font:8.05px/1 "DejaVu Sans", "Liberation Sans", sans-serif;color:#000;letter-spacing:0.171px;'>M3 Challenge PROBLEM_2019_FINAL.pdf</span>
<svg style="left:15px;top:169.66px;" width="8" height="10" viewBox="0 0 8 10"><rect x=".6" y=".4" width="6.8" height="9" fill="#fdfdfd" stroke="#e0e0e0" stroke-width=".5"/><rect x="2" y="3" width="4" height="2.6" fill="#4a7fc0"/><rect x="2" y="6.2" width="3" height=".8" fill="#c8c8c8"/></svg>
<span class="t" style='left:27.60px;top:182px;font:8.08px/1 "DejaVu Sans", "Liberation Sans", sans-serif;color:#000;letter-spacing:0.256px;'>M3C_2019.mlx</span>
<svg style="left:13.8px;top:180.32000000000002px;" width="10" height="11" viewBox="0 0 10 11"><path d="M1 .6 H6.6 L9 3 V10.4 H1 Z" fill="#fbfbfb" stroke="#8c8c8c" stroke-width=".7"/><path d="M.2 3.8 L3 .6 L5.2 3.8 Z" fill="#d6322a"/><rect x="2.2" y="5.2" width="5.6" height="3.8" fill="#3f86d2"/><rect x="2.2" y="7.6" width="5.6" height="1.4" fill="#e2b52e"/></svg>
<span class="t" style='left:27.60px;top:194px;font:8.17px/1 "DejaVu Sans", "Liberation Sans", sans-serif;color:#000;letter-spacing:0.211px;'>high_school_vaping_data.xlsx</span>
<svg style="left:13.6px;top:192.18px;" width="10" height="10" viewBox="0 0 10 10"><rect x="3.4" y="2" width="6" height="6.4" fill="#f4f4f4" stroke="#b5b5b5" stroke-width=".5"/><rect x=".4" y="2.4" width="6.2" height="5.6" rx=".8" fill="#1e8a3c"/><rect x="1.8" y="3.8" width="3" height="2.8" fill="#e8f5ea"/><rect x="7" y="4.4" width="1.6" height="1.4" fill="#6ab783"/></svg>
<span class="t" style='left:27.60px;top:206px;font:8.05px/1 "DejaVu Sans", "Liberation Sans", sans-serif;color:#000;letter-spacing:0.177px;'>Figure_Adult per capita cigarette consumption and major smoking and healt...</span>
<svg style="left:15px;top:203.44px;" width="8" height="10" viewBox="0 0 8 10"><rect x=".6" y=".4" width="6.8" height="9" fill="#fdfdfd" stroke="#e0e0e0" stroke-width=".5"/><rect x="2" y="3" width="4" height="2.6" fill="#4a7fc0"/><rect x="2" y="6.2" width="3" height=".8" fill="#c8c8c8"/></svg>
<span class="t" style='left:27.60px;top:216px;font:8.23px/1 "DejaVu Sans", "Liberation Sans", sans-serif;color:#000;letter-spacing:0.220px;'>~$NIH-DrugTrends-DataSheet .xlsx</span>
<svg style="left:13.6px;top:214.70000000000002px;" width="10" height="10" viewBox="0 0 10 10"><rect x="3.4" y="2" width="6" height="6.4" fill="#f4f4f4" stroke="#b5b5b5" stroke-width=".5"/><rect x=".4" y="2.4" width="6.2" height="5.6" rx=".8" fill="#1e8a3c"/><rect x="1.8" y="3.8" width="3" height="2.8" fill="#e8f5ea"/><rect x="7" y="4.4" width="1.6" height="1.4" fill="#6ab783"/></svg>
<div class="panel details" style="left:0px;top:574.4px;width:357.6px;height:129px;background:#fff;border:1px solid #d6dae5;border-left:1.1px solid #c9c9cd;border-bottom:0;border-top-color:#d9d9d9;"></div>
<div style="left:1px;top:575.2px;width:355.8px;height:13.9px;background:linear-gradient(180deg,#ffffff,#f3f4fb);border-bottom:1px solid #c4c4c4;"></div>
<span class="t" style='left:4.20px;top:580px;font:9.12px/1 "DejaVu Sans", "Liberation Sans", sans-serif;color:#5c5c5c;letter-spacing:-0.257px;-webkit-text-stroke-width:0.2px;'>Details</span>
<svg style="left:340.4px;top:580.2px;" width="8" height="6" viewBox="0 0 8 6"><path d="M.8 .9 L3.9 4.2 L7 .9" fill="none" stroke="#111" stroke-width="1.5" stroke-linecap="round" stroke-linejoin="round"/></svg>
<span class="t" style='left:123.80px;top:643px;font:8.05px/1 "DejaVu Sans", "Liberation Sans", sans-serif;color:#000;letter-spacing:0.098px;'>Select a file to view details</span>
</section>
<section class="live-editor-panel">
<div class="panel liveeditor" style="left:364.6px;top:134.4px;width:753px;height:396.8px;background:#fff;border:1.5px solid #0d4487;border-left-width:2.2px;border-top:0;"></div>
<div style="left:364.6px;top:134.4px;width:753px;height:13.2px;background:#003366;"></div>
<svg style="left:368.4px;top:136.4px;" width="9" height="10" viewBox="0 0 9 10"><rect x=".4" y=".4" width="8.2" height="9" fill="#f7f7f7" stroke="#cfd8e4" stroke-width=".6"/><rect x="1.6" y="1.8" width="5.6" height="1.6" fill="#bdbdbd"/><rect x="1.6" y="4.4" width="5.6" height="3.6" fill="#3a9bd9"/><rect x="1.6" y="6.4" width="5.6" height="1.8" fill="#e8c533"/><circle cx="4.4" cy="6.2" r="1.1" fill="#3da444"/></svg>
<span class="t" style='left:381.40px;top:139px;font:9.0px/1 "DejaVu Sans", "Liberation Sans", sans-serif;color:#fff;letter-spacing:0.233px;'>Live Editor - /Users/whamilto/Library/CloudStorage/OneDrive-MathWorks/SIAM_workshop_materials/2019_problem/M3C_2019.mlx</span>
<svg style="left:1082.4px;top:136.4px;" width="9.4" height="9.4" viewBox="0 0 9.4 9.4"><circle cx="4.7" cy="4.7" r="4" fill="none" stroke="#eef2f8" stroke-width="1"/><path d="M2.7 3.6 H6.7 L4.7 6.4 Z" fill="#fff"/></svg>
<svg style="left:1102.6px;top:138.2px;" width="7" height="7" viewBox="0 0 7 7"><path d="M.8 .8 L5.8 5.8 M5.8 .8 L.8 5.8" stroke="#fff" stroke-width="1.4"/></svg>
<div style="left:366.5px;top:147.6px;width:749.6px;height:15px;background:#ececec;"></div>
<div style="left:366.5px;top:161.3px;width:749.6px;height:1.1px;background:#c2c2c2;"></div>
<div style="left:367px;top:148.6px;width:9.4px;height:13px;background:linear-gradient(90deg,#c8c8c8,#ededed 45%,#e6e6e6);border-radius:0 0 3px 0;border-right:1px solid #bdbdbd;border-bottom:1px solid #bdbdbd;"></div>
<div style="left:377.4px;top:148.4px;width:92.8px;height:14.4px;background:#fff;border:1px solid #c8c8c8;border-bottom:0;border-radius:3px 3px 0 0;"></div>
<span class="t" style='left:385.80px;top:152px;font:8.73px/1 "DejaVu Sans", "Liberation Sans", sans-serif;color:#000;letter-spacing:-0.113px;'>M3C_2019.mlx</span>
<svg style="left:459.2px;top:152px;" width="6.4" height="6.4" viewBox="0 0 6.4 6.4"><path d="M.8 .8 L5.4 5.4 M5.4 .8 L.8 5.4" stroke="#a4a4a4" stroke-width="1.6"/></svg>
<div style="left:471px;top:149px;width:18.6px;height:13px;background:linear-gradient(180deg,#f4f4f4,#dedede);border:1px solid #bdbdbd;border-top-color:#d6d6d6;border-radius:3px 3px 3px 3px;"></div>
<svg style="left:476.4px;top:151.6px;" width="8" height="8" viewBox="0 0 8 8"><path d="M0 3.8 H7.6 M3.8 0 V7.6" stroke="#111" stroke-width="1.2"/></svg>
<div style="left:366.8px;top:162.6px;width:4.3px;height:325.6px;background:#3d7fe0;"></div>
<div style="left:371.1px;top:162.6px;width:31.8px;height:367.4px;background:#f5f5f5;"></div>
<div style="left:366.8px;top:488.2px;width:4.3px;height:41.8px;background:#f5f5f5;"></div>
<div style="left:402.9px;top:162.6px;width:1px;height:367.4px;background:#e0e0e0;"></div>
<span class="t" style='left:376.00px;top:172px;font:9.3px/1 "DejaVu Sans Mono", "Liberation Mono", monospace;color:#4a4a4a;'>50</span>
<div style="left:421px;top:165.4px;width:669.8px;height:19.2px;background:#f7f7f7;border:1px solid #d2d2d2;"></div>
<div style="left:491.6px;top:170.2px;width:56.2px;height:10.6px;background:#d2eaf6;"></div>
<span class="t" style='left:430.20px;top:172px;font:9.3px/1 "DejaVu Sans Mono", "Liberation Mono", monospace;color:#111;letter-spacing:-0.016px;'>plot(years,mergedData)</span>
<div style="left:547.9px;top:169.6px;width:0.8px;height:11.6px;background:#333;"></div>
<div style="left:371.1px;top:488.2px;width:719.6px;height:1px;background:#4a86d9;"></div>
<h2 class="t" style='left:421.80px;top:497px;font:700 13.48px/1 "Liberation Sans", sans-serif;color:#0a0a0a;letter-spacing:-0.099px;-webkit-text-stroke-width:0.2px;'>Comparison to cigarettes</h2>
<div style="left:404.6px;top:522.4px;width:686px;height:7.6px;background:#fafafa;border-top:1px solid #ececec;"></div>
<div style="left:406.4px;top:523.8px;width:449.6px;height:4.8px;background:#b9b9b9;border-radius:2.4px;"></div>
<div style="left:1091px;top:162.6px;width:10px;height:367.4px;background:#fafafa;border-left:1px solid #ededed;"></div>
<div style="left:1092.8px;top:434.4px;width:5.6px;height:83.8px;background:#b9b9b9;border-radius:2.8px;"></div>
<div style="left:1101px;top:162.6px;width:15.2px;height:367.4px;background:#f4f4f4;border-left:1px solid #e4e4e4;"></div>
<div style="left:1105px;top:425.1px;width:8.2px;height:1.4px;background:#5582a8;"></div>
<div style="left:1105px;top:452.1px;width:8.2px;height:1.4px;background:#5582a8;"></div>
<svg style="left:1103.6px;top:166px;" width="10.4" height="12" viewBox="0 0 10.4 12"><rect x=".4" y=".4" width="9.6" height="11.2" fill="#fbfbfb" stroke="#8e8e8e" stroke-width=".8"/></svg>
<svg style="left:1105.4px;top:168px;" width="7" height="8" viewBox="0 0 7 8"><rect x="0" y="0" width="3" height="1.4" fill="#e0a050"/><rect x="0" y="2.6" width="3" height="4.2" fill="#9a9a9a"/><rect x="4.2" y="2.4" width="2.6" height="1.4" fill="#3f9a2e"/><rect x="4.2" y="4.4" width="2.6" height="1.4" fill="#3a7fd0"/><rect x="4.2" y="6.2" width="2.6" height="1.2" fill="#e2b52e"/></svg>
<div style="left:1102.0px;top:180.6px;width:13.6px;height:15.6px;background:#dcdcdc;border:1.2px solid #9a9a9a;border-radius:3px;"></div>
<svg style="left:1103.6px;top:182.4px;" width="10.4" height="12" viewBox="0 0 10.4 12"><rect x=".4" y=".4" width="9.6" height="11.2" fill="#fbfbfb" stroke="#8e8e8e" stroke-width=".8"/></svg>
<svg style="left:1105.4px;top:184.4px;" width="7" height="8" viewBox="0 0 7 8"><rect x="0" y="0" width="4" height="1.4" fill="#e0a050"/><rect x="0" y="2.2" width="6" height="1.2" fill="#9a9a9a"/><rect x="1.6" y="4.4" width="5" height="1.6" fill="#3a7fd0"/><rect x="1.6" y="6.2" width="5" height="1.4" fill="#e2b52e"/><rect x="1.6" y="5.6" width="2" height="1.2" fill="#3f9a2e"/></svg>
<svg style="left:1103.6px;top:198.4px;" width="10.4" height="12" viewBox="0 0 10.4 12"><rect x=".4" y=".4" width="9.6" height="11.2" fill="#fbfbfb" stroke="#8e8e8e" stroke-width=".8"/></svg>
<svg style="left:1105.4px;top:200.4px;" width="7" height="8" viewBox="0 0 7 8"><rect x="0" y="0" width="4" height="1.4" fill="#e0a050"/><rect x="0" y="2.6" width="2.4" height="1.2" fill="#3a7fd0"/><rect x="3.2" y="2.6" width="3.4" height="1.2" fill="#777"/><rect x="0" y="4.6" width="2.4" height="1.2" fill="#3f9a2e"/><rect x="3.2" y="4.6" width="3.4" height="1.2" fill="#777"/><rect x="0" y="6.6" width="6" height="1" fill="#999"/></svg>
<svg style="left:0px;top:0px;pointer-events:none;" width="1280" height="720" viewBox="0 0 1280 720"><rect x="481.1" y="213.5" width="288.7" height="228.0" fill="#fff" stroke="#737373" stroke-width="1.05"/><path d="M522.34 441.5 v-2.6 M522.34 213.5 v2.6 M563.59 441.5 v-2.6 M563.59 213.5 v2.6 M604.83 441.5 v-2.6 M604.83 213.5 v2.6 M646.07 441.5 v-2.6 M646.07 213.5 v2.6 M687.31 441.5 v-2.6 M687.31 213.5 v2.6 M728.56 441.5 v-2.6 M728.56 213.5 v2.6 M481.1 395.90 h2.6 M769.8 395.90 h-2.6 M481.1 350.30 h2.6 M769.8 350.30 h-2.6 M481.1 304.70 h2.6 M769.8 304.70 h-2.6 M481.1 259.10 h2.6 M769.8 259.10 h-2.6 " stroke="#737373" stroke-width=".8" fill="none"/><polyline points="481.10,427.82 522.34,415.96 563.59,400.46 604.83,319.29 646.07,302.42 687.31,334.34 728.56,305.61 769.80,221.71" fill="none" stroke="#72a7dc" stroke-width=".9" stroke-linejoin="round"/><g font-family="Liberation Sans, sans-serif" font-size="6.75" fill="#0c0c0c" stroke="#0c0c0c" stroke-width=".16" text-rendering="geometricPrecision"><text x="481.10" y="451.1" text-anchor="middle">2011</text><text x="522.34" y="451.1" text-anchor="middle">2012</text><text x="563.59" y="451.1" text-anchor="middle">2013</text><text x="604.83" y="451.1" text-anchor="middle">2014</text><text x="646.07" y="451.1" text-anchor="middle">2015</text><text x="687.31" y="451.1" text-anchor="middle">2016</text><text x="728.56" y="451.1" text-anchor="middle">2017</text><text x="769.80" y="451.1" text-anchor="middle">2018</text><text x="478.8" y="444.10" text-anchor="end">0</text><text x="478.8" y="398.50" text-anchor="end">5</text><text x="478.8" y="352.90" text-anchor="end">10</text><text x="478.8" y="307.30" text-anchor="end">15</text><text x="478.8" y="261.70" text-anchor="end">20</text><text x="478.8" y="216.10" text-anchor="end">25</text></g></svg>
<svg style="left:797px;top:311.4px;" width="9" height="14" viewBox="0 0 9 14"><path d="M.8 .8 V11 L3.2 8.8 L4.9 12.6 L6.5 11.9 L4.8 8.2 H8 Z" fill="#111" stroke="#fff" stroke-width=".7" stroke-linejoin="round"/></svg>
<div style="left:739.4px;top:533.4px;width:3px;height:3px;background:#d2d2d2;border-radius:50%;"></div>
<div style="left:1119.6px;top:418.6px;width:3px;height:3px;background:#d8d8d8;border-radius:50%;"></div>
<div style="left:359.6px;top:418.6px;width:3px;height:3px;background:#d8d8d8;border-radius:50%;"></div>
</section>
<section class="command-window-panel">
<div class="panel commandwindow" style="left:365.4px;top:538.4px;width:752px;height:165px;background:#fff;border:1px solid #b9c6dc;border-right-color:#dfe2ea;border-bottom-color:#e2e4ea;"></div>
<div style="left:366.4px;top:539.2px;width:750px;height:11.9px;background:linear-gradient(180deg,#ffffff,#f3f4fb);border-bottom:1px solid #c8c8c8;"></div>
<span class="t" style='left:369.60px;top:541px;font:9.31px/1 "DejaVu Sans", "Liberation Sans", sans-serif;color:#222;letter-spacing:-0.129px;-webkit-text-stroke-width:0.25px;'>Command Window</span>
<svg style="left:1101.1px;top:540.5px;" width="9" height="9" viewBox="0 0 9 9"><circle cx="4.5" cy="4.5" r="3.7" fill="#fff" stroke="#555" stroke-width=".8"/><path d="M2.7 3.5 H6.3 L4.5 6 Z" fill="#333"/></svg>
<div style="left:366.4px;top:551.2px;width:11.4px;height:151.2px;background:#ededed;"></div>
<span class="t" style='left:368.60px;top:556px;font:italic 10.4px/1 "Liberation Serif", serif;color:#111;letter-spacing:-0.300px;'>fx</span>
<svg style="left:372.6px;top:564.2px;" width="4" height="3" viewBox="0 0 4 3"><path d="M0 0 H3.6 L1.8 2.2 Z" fill="#222"/></svg>
<span class="t" style='left:380.80px;top:558px;font:8.7px/1 "DejaVu Sans Mono", "Liberation Mono", monospace;color:#000;-webkit-text-stroke-width:0.5px;'>&gt;&gt;</span>
</section>
<section class="workspace-panel">
<div class="panel workspace" style="left:1125px;top:134.6px;width:153.6px;height:568px;background:#fff;border:1px solid #adadb3;"></div>
<div style="left:1126px;top:135.4px;width:151.6px;height:11.6px;background:linear-gradient(180deg,#ffffff,#f3f4fb);border-bottom:1px solid #9fa3ad;"></div>
<span class="t" style='left:1128.60px;top:137px;font:9.31px/1 "DejaVu Sans", "Liberation Sans", sans-serif;color:#222;letter-spacing:-0.233px;-webkit-text-stroke-width:0.25px;'>Workspace</span>
<svg style="left:1263.3px;top:136.7px;" width="9" height="9" viewBox="0 0 9 9"><circle cx="4.5" cy="4.5" r="3.7" fill="#fff" stroke="#555" stroke-width=".8"/><path d="M2.7 3.5 H6.3 L4.5 6 Z" fill="#333"/></svg>
<span class="t" style='left:1128.80px;top:150px;font:7.37px/1 "DejaVu Sans", "Liberation Sans", sans-serif;color:#111;letter-spacing:-0.711px;'>Name</span>
<svg style="left:1151.6px;top:150.8px;" width="5" height="4.4" viewBox="0 0 5 4.4"><path d="M0 4 H4.6 L2.3 0 Z" fill="#777"/></svg>
<div style="left:1212.4px;top:149px;width:1px;height:9px;background:#dcdcdc;"></div>
<span class="t" style='left:1215.40px;top:150px;font:7.37px/1 "DejaVu Sans", "Liberation Sans", sans-serif;color:#111;letter-spacing:-0.308px;'>Value</span>
<span class="t" style='left:1139.60px;top:162px;font:8.05px/1 "DejaVu Sans", "Liberation Sans", sans-serif;color:#000;'>HSData</span>
<span class="t" style='left:1215.60px;top:162px;font:8.05px/1 "DejaVu Sans", "Liberation Sans", sans-serif;color:#000;letter-spacing:0.214px;'>[1.5000,2.8000</span>
<svg style="left:1127px;top:159.2px;" width="10" height="10" viewBox="0 0 10 10"><rect x=".4" y=".4" width="9.2" height="9.2" fill="#f6e27a" stroke="#7fa6d6" stroke-width=".8"/><rect x=".8" y=".8" width="3.8" height="3.6" fill="#fdfdfd"/><rect x="5.4" y=".8" width="3.8" height="3.6" fill="#f9ee9a"/><path d="M5 .4 V9.6 M.4 4.8 H9.6" stroke="#6e8fb6" stroke-width=".8"/></svg>
<span class="t" style='left:1139.60px;top:172px;font:8.08px/1 "DejaVu Sans", "Liberation Sans", sans-serif;color:#000;letter-spacing:0.252px;'>HSTable</span>
<span class="t" style='left:1215.60px;top:173px;font:italic 8.05px/1 "DejaVu Sans", "Liberation Sans", sans-serif;color:#15518f;letter-spacing:0.206px;'>1x5 table</span>
<svg style="left:1127px;top:170.2px;" width="10" height="10" viewBox="0 0 10 10"><rect x=".4" y=".4" width="9.2" height="9.2" fill="#f0e6a0" stroke="#4f7fb8" stroke-width=".8"/><rect x=".8" y=".8" width="8.4" height="2.2" fill="#7fa3cf"/><path d="M3.4 .4 V9.6 M6.4 .4 V9.6 M.4 3.2 H9.6 M.4 6.2 H9.6" stroke="#4f7fb8" stroke-width=".7"/></svg>
<span class="t" style='left:1139.60px;top:185px;font:8.05px/1 "DejaVu Sans", "Liberation Sans", sans-serif;color:#000;letter-spacing:-0.017px;'>mergedData</span>
<span class="t" style='left:1215.60px;top:185px;font:8.05px/1 "DejaVu Sans", "Liberation Sans", sans-serif;color:#000;letter-spacing:0.214px;'>[1.5000,2.8000</span>
<svg style="left:1127px;top:182.2px;" width="10" height="10" viewBox="0 0 10 10"><rect x=".4" y=".4" width="9.2" height="9.2" fill="#f6e27a" stroke="#7fa6d6" stroke-width=".8"/><rect x=".8" y=".8" width="3.8" height="3.6" fill="#fdfdfd"/><rect x="5.4" y=".8" width="3.8" height="3.6" fill="#f9ee9a"/><path d="M5 .4 V9.6 M.4 4.8 H9.6" stroke="#6e8fb6" stroke-width=".8"/></svg>
<span class="t" style='left:1139.60px;top:196px;font:8.05px/1 "DejaVu Sans", "Liberation Sans", sans-serif;color:#000;letter-spacing:-0.044px;'>NIHData</span>
<span class="t" style='left:1215.60px;top:195px;font:italic 8.13px/1 "DejaVu Sans", "Liberation Sans", sans-serif;color:#15518f;letter-spacing:0.238px;'>4x4 double</span>
<svg style="left:1127px;top:193.2px;" width="10" height="10" viewBox="0 0 10 10"><rect x=".4" y=".4" width="9.2" height="9.2" fill="#f6e27a" stroke="#7fa6d6" stroke-width=".8"/><rect x=".8" y=".8" width="3.8" height="3.6" fill="#fdfdfd"/><rect x="5.4" y=".8" width="3.8" height="3.6" fill="#f9ee9a"/><path d="M5 .4 V9.6 M.4 4.8 H9.6" stroke="#6e8fb6" stroke-width=".8"/></svg>
<span class="t" style='left:1139.60px;top:207px;font:8.05px/1 "DejaVu Sans", "Liberation Sans", sans-serif;color:#000;letter-spacing:0.246px;'>NIHHSData</span>
<span class="t" style='left:1215.60px;top:207px;font:8.05px/1 "DejaVu Sans", "Liberation Sans", sans-serif;color:#000;letter-spacing:0.076px;'>[15.2500,11.7500</span>
<svg style="left:1127px;top:204.2px;" width="10" height="10" viewBox="0 0 10 10"><rect x=".4" y=".4" width="9.2" height="9.2" fill="#f6e27a" stroke="#7fa6d6" stroke-width=".8"/><rect x=".8" y=".8" width="3.8" height="3.6" fill="#fdfdfd"/><rect x="5.4" y=".8" width="3.8" height="3.6" fill="#f9ee9a"/><path d="M5 .4 V9.6 M.4 4.8 H9.6" stroke="#6e8fb6" stroke-width=".8"/></svg>
<span class="t" style='left:1139.60px;top:219px;font:8.5px/1 "DejaVu Sans", "Liberation Sans", sans-serif;color:#000;letter-spacing:0.251px;'>NIHTable</span>
<span class="t" style='left:1215.60px;top:219px;font:italic 8.05px/1 "DejaVu Sans", "Liberation Sans", sans-serif;color:#15518f;letter-spacing:0.206px;'>4x4 table</span>
<svg style="left:1127px;top:216.2px;" width="10" height="10" viewBox="0 0 10 10"><rect x=".4" y=".4" width="9.2" height="9.2" fill="#f0e6a0" stroke="#4f7fb8" stroke-width=".8"/><rect x=".8" y=".8" width="8.4" height="2.2" fill="#7fa3cf"/><path d="M3.4 .4 V9.6 M6.4 .4 V9.6 M.4 3.2 H9.6 M.4 6.2 H9.6" stroke="#4f7fb8" stroke-width=".7"/></svg>
<span class="t" style='left:1139.60px;top:230px;font:8.05px/1 "DejaVu Sans", "Liberation Sans", sans-serif;color:#000;letter-spacing:-0.090px;'>years</span>
<span class="t" style='left:1215.60px;top:230px;font:8.05px/1 "DejaVu Sans", "Liberation Sans", sans-serif;color:#000;letter-spacing:0.193px;'>[2011,2012,2013</span>
<svg style="left:1127px;top:227.2px;" width="10" height="10" viewBox="0 0 10 10"><rect x=".4" y=".4" width="9.2" height="9.2" fill="#f6e27a" stroke="#7fa6d6" stroke-width=".8"/><rect x=".8" y=".8" width="3.8" height="3.6" fill="#fdfdfd"/><rect x="5.4" y=".8" width="3.8" height="3.6" fill="#f9ee9a"/><path d="M5 .4 V9.6 M.4 4.8 H9.6" stroke="#6e8fb6" stroke-width=".8"/></svg>
<div style="left:1278px;top:149px;width:1.4px;height:560px;background:#ececec;"></div>
<div style="left:1277.6px;top:134.6px;width:1px;height:568px;background:#adadb3;"></div>
<div style="left:1126px;top:691.6px;width:151.6px;height:10px;background:#fafafa;border-top:1px solid #ececec;"></div>
<div style="left:1127.8px;top:694.8px;width:129.2px;height:4.8px;background:#b7b7b7;border-radius:2.4px;"></div>
</section>
<section class="status-bar">
<div class="statusbar" style="left:0px;top:703.4px;width:1280px;height:16.6px;background:#ececec;border-radius:0 0 7px 7px;"></div>
<div style="left:0px;top:703.2px;width:1280px;height:1px;background:#dedede;"></div>
<div style="left:741.8px;top:705.8px;width:83.80000000000007px;height:12.6px;background:#eeeeee;border:1px solid #dadada;border-right-color:#e6e6e6;border-bottom-color:#e6e6e6;"></div>
<div style="left:827.4px;top:705.8px;width:93.80000000000007px;height:12.6px;background:#eeeeee;border:1px solid #dadada;border-right-color:#e6e6e6;border-bottom-color:#e6e6e6;"></div>
<div style="left:923.4px;top:705.8px;width:40.80000000000007px;height:12.6px;background:#eeeeee;border:1px solid #dadada;border-right-color:#e6e6e6;border-bottom-color:#e6e6e6;"></div>
<div style="left:966px;top:705.8px;width:189px;height:12.6px;background:#eeeeee;border:1px solid #dadada;border-right-color:#e6e6e6;border-bottom-color:#e6e6e6;"></div>
<div style="left:1156.4px;top:705.8px;width:111.0px;height:12.6px;background:#eeeeee;border:1px solid #dadada;border-right-color:#e6e6e6;border-bottom-color:#e6e6e6;"></div>
<span class="t" style='left:746.00px;top:709px;font:8.05px/1 "DejaVu Sans", "Liberation Sans", sans-serif;color:#000;letter-spacing:0.013px;'>Zoom: 100%</span>
<span class="t" style='left:830.60px;top:709px;font:8.55px/1 "DejaVu Sans", "Liberation Sans", sans-serif;color:#000;letter-spacing:0.522px;'>UTF-8</span>
<span class="t" style='left:926.60px;top:708px;font:8.09px/1 "DejaVu Sans", "Liberation Sans", sans-serif;color:#000;letter-spacing:0.432px;'>LF</span>
<span class="t" style='left:969.40px;top:708px;font:8.16px/1 "DejaVu Sans", "Liberation Sans", sans-serif;color:#000;letter-spacing:0.214px;'>script</span>
<span class="t" style='left:1160.00px;top:709px;font:8.5px/1 "DejaVu Sans", "Liberation Sans", sans-serif;color:#000;letter-spacing:0.477px;'>Ln</span>
<span class="t" style='left:1178.40px;top:708px;font:8.1px/1 "DejaVu Sans", "Liberation Sans", sans-serif;color:#000;letter-spacing:0.486px;'>50</span>
<span class="t" style='left:1218.00px;top:708px;font:8.17px/1 "DejaVu Sans", "Liberation Sans", sans-serif;color:#000;letter-spacing:0.306px;'>Col</span>
<span class="t" style='left:1240.00px;top:709px;font:8.05px/1 "DejaVu Sans", "Liberation Sans", sans-serif;color:#000;letter-spacing:0.354px;'>22</span>
<svg style="left:3px;top:707px;" width="16" height="10" viewBox="0 0 16 10"><defs><linearGradient id="gsb" x1="0" y1="0" x2="0" y2="1"><stop offset="0" stop-color="#8c8c8c"/><stop offset="1" stop-color="#c4c4c4"/></linearGradient></defs><path d="M.2 .2 h1.5 v9.4 h-1.5 Z M3.1 .2 h1.5 v9.4 h-1.5 Z M6 .2 h1.5 v9.4 h-1.5 Z M8.9 .2 h1.5 v9.4 h-1.5 Z" fill="url(#gsb)"/><path d="M12 6.6 H15.2 L13.6 4.6 Z" fill="#111"/></svg>
<div style="left:23px;top:706.4px;width:1px;height:11.4px;background:#d4d0d8;"></div>
</section>
</div>
</body>
</html>
